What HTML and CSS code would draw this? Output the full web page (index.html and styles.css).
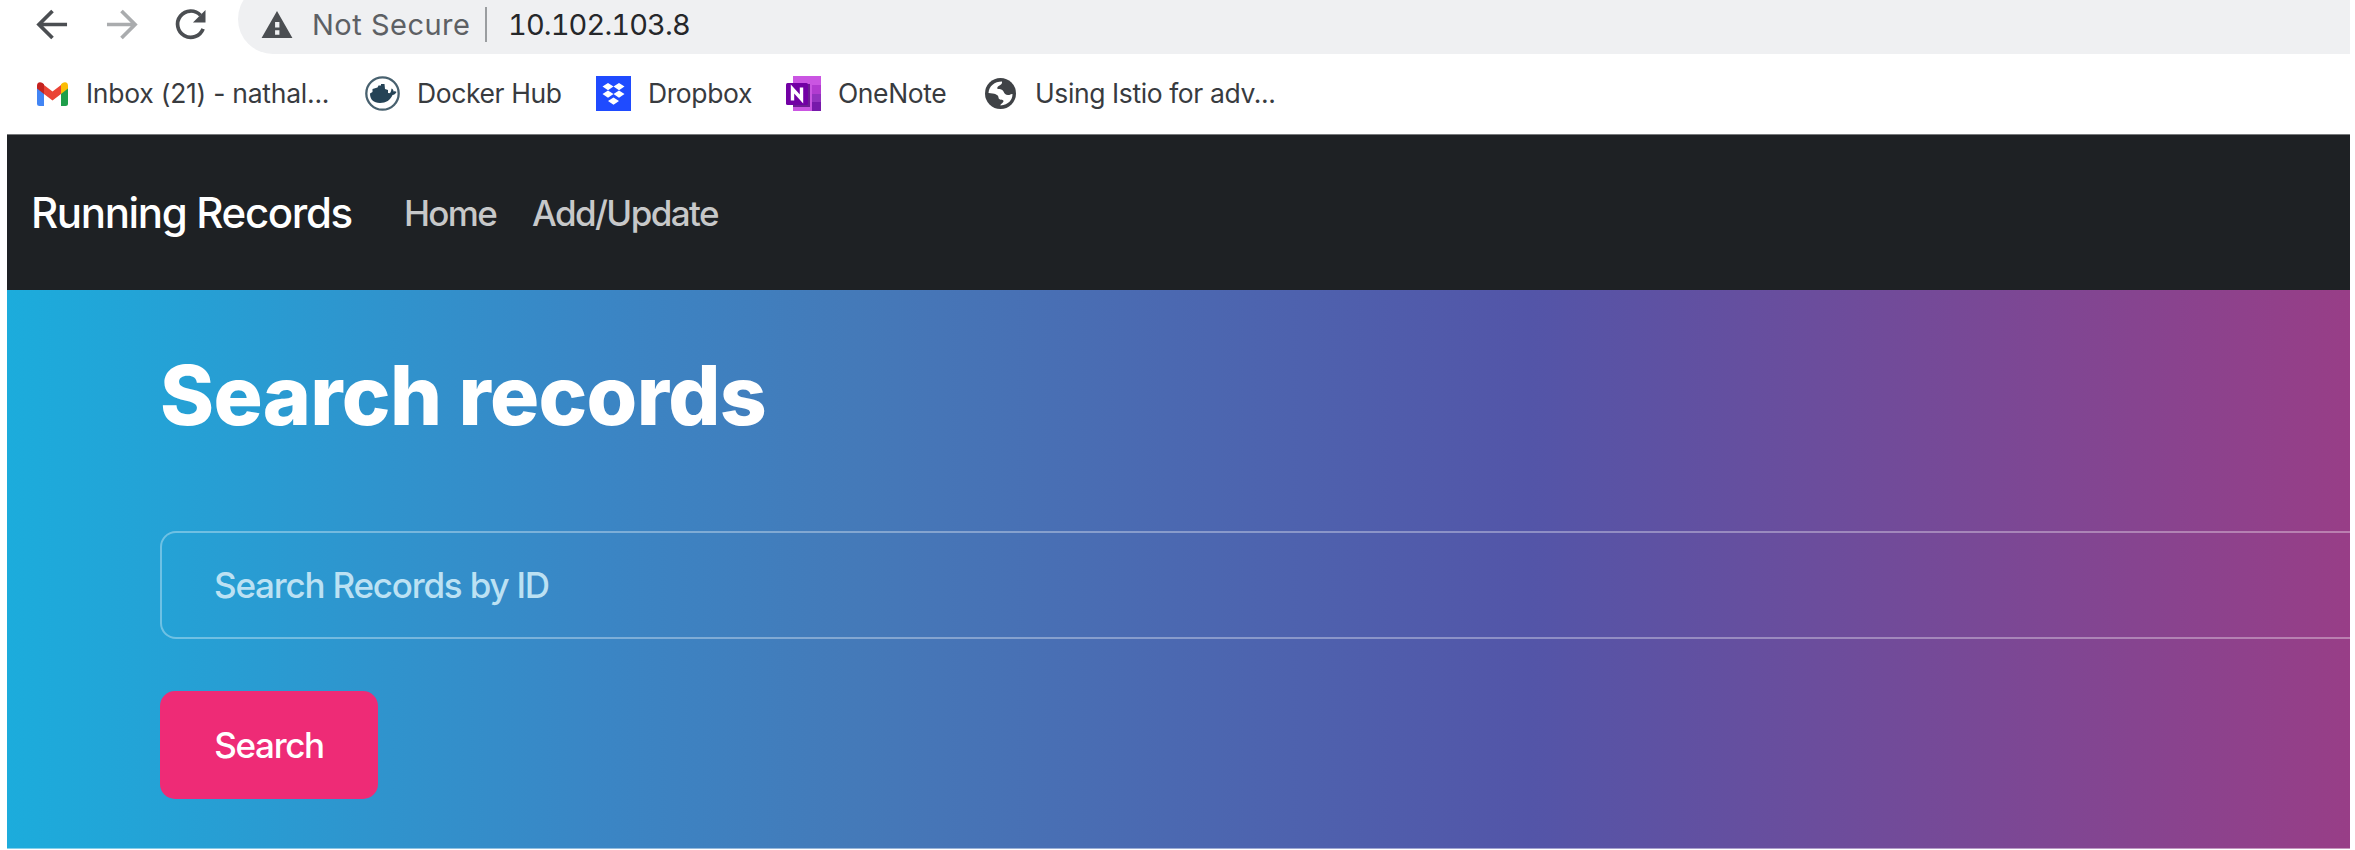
FILE: index.html
```html
<!DOCTYPE html>
<html lang="en">
<head>
<meta charset="utf-8">
<title>Running Records</title>
<link rel="stylesheet" href="styles.css">
</head>
<body>
<header class="toolbar">
  <svg class="back" viewBox="0 0 32 32"><path d="M31 16H3M16 2 2 16l14 14"/></svg>
  <svg class="forward" viewBox="0 0 32 32"><path d="M1 16h28M16 2l14 14-14 14"/></svg>
  <svg class="reload" viewBox="0 0 32 32"><path class="arc" d="M26.3 6.500A13.600 13.600 0 1 0 29 20.500"/><path class="tip" d="M31.500 1v13H18.500z"/></svg>
  <div class="address">
    <svg class="warn" viewBox="0 0 32 28"><path fill-rule="evenodd" d="M16 0 32 28H0zM14 11.500v5.500h4.500v-5.500zM14 20v4.500h4.500V20z"/></svg>
    <span class="insecure">Not Secure</span>
    <span class="divider"></span>
    <span class="url">10.102.103.8</span>
  </div>
</header>
<nav class="bookmarks">
  <a class="bookmark inbox"><svg class="gmail" viewBox="0 0 31 24"><path fill="#4285f4" d="M0 4v17.500Q0 24 2.500 24H7V9z"/><path fill="#1e9e4a" d="M31 4v17.500q0 2.500-2.500 2.500H24V9z"/><path fill="#ea4335" d="M7 3l8.500 6.500L24 3v9l-8.500 6.500L7 12z"/><path fill="#c5221f" d="M0 3.500C0 .3 3-.8 5.500 1L7 2.200V12L0 6.500z"/><path fill="#fbbc04" d="M31 3.500C31 .3 28-.8 25.500 1L24 2.200V12l7-5.500z"/></svg><span>Inbox (21) - nathal...</span></a>
  <a class="bookmark docker"><svg class="icon" viewBox="0 0 35 35"><circle cx="17.500" cy="17.500" r="16.200" fill="#fff" stroke="#48616f" stroke-width="2.300"/><path fill="#254356" d="M5 17.500 7.500 16v-3l5-1.500 1-2H16V8h3.500l.5 5 3 1v3c2 .5 3 0 3.500-4.500 1.500.5 2 1.500 2 3 1.500-.5 2.500 0 3 .5-1 2-2.500 3-4 3C25.500 24 21 27 15 27 8.500 27 5 23.500 5 17.500z"/></svg><span>Docker Hub</span></a>
  <a class="bookmark dropbox"><svg class="icon" viewBox="0 0 35 35"><path fill="#1f4bff" d="M0 0h35v35H0z"/><path fill="#fff" d="m12 7 5.500 3.600L12 14.200l-5.500-3.600zM23 7l5.500 3.600-5.500 3.600-5.500-3.600zM12 14.500l5.500 3.600-5.500 3.600-5.500-3.600zM23 14.500l5.500 3.600-5.500 3.600-5.500-3.600zM17.500 21.500l5.500 3.600-5.500 3.600-5.500-3.600z"/></svg><span>Dropbox</span></a>
  <a class="bookmark onenote"><svg class="icon" viewBox="0 0 35 35"><path fill="#ca55e2" d="M7 0h28v35H7z"/><path fill="#b23bd0" d="M26 9h9v9h-9z"/><path fill="#9332bf" d="M26 18h9v8h-9z"/><path fill="#7719aa" d="M26 26h9v9h-9z"/><path fill="#4d0a78" d="M7 8h17v23H7z" opacity=".75"/><rect y="7" width="22" height="22" rx="1.500" fill="#7200a4"/><path fill="none" stroke="#fff" stroke-width="3.400" d="M6.500 24.500V13l9 10V11.500"/></svg><span>OneNote</span></a>
  <a class="bookmark istio"><svg class="globe" viewBox="0 0 31 31"><circle cx="15.500" cy="15.500" r="15.500" fill="#3f4246"/><path fill="#fff" d="M3.500 15C4 8 9.500 3.500 17 3.500c.5 2-1 3-2.500 4-2 1-2.500 1.500-2 3.500 3 0 5 .5 6 2.500s2 3.500 4.500 3.500 3-1.500 4.500-1c0 6-4 10.500-12 11.500-.5-1.500 3-2.500 3-4.500s-5-.5-5-3.500-4-4-10-4.500z"/></svg><span>Using Istio for adv...</span></a>
</nav>
<main class="page">
  <nav class="navbar">
    <a class="brand">Running Records</a>
    <a class="link home">Home</a>
    <a class="link add">Add/Update</a>
  </nav>
  <section class="hero">
    <h1 class="title">Search records</h1>
    <div class="field">Search Records by ID</div>
    <button class="submit">Search</button>
  </section>
</main>
</body>
</html>
```
FILE: styles.css
```css
* { box-sizing: border-box; }
body {
  margin: 0;
  height: 850px;
  overflow: hidden;
  background: #fff;
  font-family: Inter, "Liberation Sans", sans-serif;
}
svg { display: block; flex: none; overflow: visible; }
span, a { white-space: nowrap; }
.toolbar {
  display: flex;
  height: 54px;
  padding: 0 5px 0 37px;
}
.toolbar > svg {
  width: 31px;
  height: 31px;
  margin-top: 9px;
  fill: none;
  stroke: #4b4e52;
  stroke-width: 3.800;
}
.toolbar .forward { margin-left: 38px; stroke: #aaacae; }
.toolbar .reload { margin-left: 38px; }
.toolbar .reload .tip { fill: #4b4e52; stroke: none; }
.address {
  display: flex;
  flex: 1;
  height: 70px;
  margin: -16px 0 0 32px;
  padding: 16px 0 0 23px;
  border-radius: 35px 0 0 35px;
  background: #eff0f2;
  font-size: 29px;
  line-height: 34px;
}
.warn { width: 32px; height: 27px; margin-top: 11px; fill: #4b4e52; }
.insecure {
  width: 173px;
  margin: 8px 0 0 19px;
  color: #5d6064;
  letter-spacing: .5px;
}
.divider { width: 2px; height: 35px; margin-top: 7px; background: #9a9da0; }
.url {
  margin: 8px 0 0 21px;
  color: #25272a;
  font-variant-numeric: tabular-nums;
  letter-spacing: -.9px;
}
.bookmarks {
  display: flex;
  align-items: center;
  height: 80px;
  padding: 0 0 1px 37px;
  color: #383b3f;
  font-size: 26.500px;
  letter-spacing: -.4px;
  line-height: 32px;
}
.bookmark { display: flex; align-items: center; }
.bookmark span { margin-top: -2px; }
.icon { width: 35px; height: 35px; margin-right: 17px; }
.gmail { width: 31px; height: 24px; margin-right: 18px; }
.globe { width: 31px; height: 31px; margin-right: 19px; }
.inbox { width: 328px; letter-spacing: -.25px; }
.docker { width: 231px; }
.dropbox { width: 190px; }
.onenote { width: 199px; }
.page { margin: 0 5px 0 7px; }
.navbar {
  display: flex;
  align-items: center;
  height: 156px;
  padding-left: 24px;
  border-top: 1px solid #77797b;
  background: #1e2124;
}
.brand {
  width: 373px;
  color: #fff;
  font-size: 42px;
  font-weight: 500;
  letter-spacing: -1.350px;
}
.link { color: #c7c8c9; font-size: 35px; font-weight: 500; letter-spacing: -1.600px; }
.home { width: 128px; letter-spacing: -1.700px; }
.hero {
  height: 559px;
  padding: 56px 0 0 153px;
  border-bottom: 1px solid rgba(255, 255, 255, .45);
  background: linear-gradient(90deg, #1cacdc 0%, #3a86c5 25%, #447ab9 36%, #5355a8 65%, #983e87 100%);
}
.title {
  margin: 0;
  color: #fff;
  font-size: 82px;
  line-height: 100px;
  font-weight: 800;
  letter-spacing: -.700px;
}
.field {
  height: 108px;
  margin-top: 85px;
  padding-left: 52px;
  border: 2px solid rgba(255, 255, 255, .34);
  border-right: 0;
  border-radius: 16px 0 0 16px;
  color: #bce1f3;
  font-size: 35px;
  font-weight: 500;
  letter-spacing: -1.200px;
  line-height: 105px;
}
.submit {
  display: block;
  width: 218px;
  height: 108px;
  margin-top: 52px;
  padding: 0;
  border: 0;
  border-radius: 15px;
  background: #ee2b76;
  color: #fff;
  font: 500 35px/109px Inter, "Liberation Sans", sans-serif;
  letter-spacing: -1.300px;
}
```
